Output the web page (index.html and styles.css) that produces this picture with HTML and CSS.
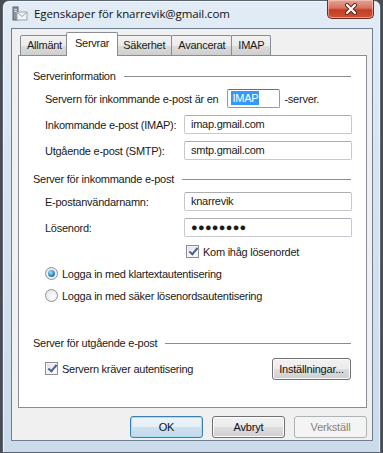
FILE: index.html
```html
<!DOCTYPE html>
<html lang="sv">
<head>
  <meta charset="UTF-8">
  <title>Egenskaper för knarrevik@gmail.com</title>
  <link rel="stylesheet" href="styles.css">
</head>
<body>
  <div class="window">
    <div class="titlebar">
      <svg class="app-icon" width="16" height="16" viewBox="0 0 16 16">
        <rect x="1" y="1" width="5" height="13" fill="#8a949c" stroke="#5d656b" stroke-width="1"/>
        <rect x="2" y="3" width="3" height="1" fill="#d4dadf"/>
        <rect x="2" y="5" width="3" height="1" fill="#d4dadf"/>
        <rect x="5" y="6" width="10" height="8" fill="#f4f4f4" stroke="#9aa3aa" stroke-width="1"/>
        <path d="M5.5 6.5 L10 10.5 L14.5 6.5" fill="none" stroke="#9aa3aa" stroke-width="1"/>
      </svg>
      <span class="title">Egenskaper för knarrevik@gmail.com</span>
      <div class="close">
        <svg width="14" height="12" viewBox="0 0 14 12">
          <path d="M3 2 L11 10 M11 2 L3 10" stroke="#5a2220" stroke-width="4" stroke-linecap="round"/>
          <path d="M3 2 L11 10 M11 2 L3 10" stroke="#ffffff" stroke-width="2.2" stroke-linecap="round"/>
        </svg>
      </div>
    </div>

    <div class="client">
      <div class="tabs">
        <div class="tab">Allmänt</div>
        <div class="tab active">Servrar</div>
        <div class="tab">Säkerhet</div>
        <div class="tab">Avancerat</div>
        <div class="tab">IMAP</div>
      </div>

      <div class="panel">
        <div class="group-head first">
          <span>Serverinformation</span>
          <div class="rule"></div>
        </div>
        <div class="row">
          <span>Servern för inkommande e-post är en</span>
          <div class="field small focused"><span class="selected">IMAP</span></div>
          <span>-server.</span>
        </div>
        <div class="row">
          <span class="label">Inkommande e-post (IMAP):</span>
          <div class="field">imap.gmail.com</div>
        </div>
        <div class="row">
          <span class="label">Utgående e-post (SMTP):</span>
          <div class="field">smtp.gmail.com</div>
        </div>

        <div class="group-head second">
          <span>Server för inkommande e-post</span>
          <div class="rule"></div>
        </div>
        <div class="row">
          <span class="label">E-postanvändarnamn:</span>
          <div class="field">knarrevik</div>
        </div>
        <div class="row">
          <span class="label">Lösenord:</span>
          <div class="field password">●●●●●●●●</div>
        </div>
        <div class="check-row remember">
          <span class="checkbox checked"></span>
          <span>Kom ihåg lösenordet</span>
        </div>
        <div class="check-row radio-one">
          <span class="radio on"></span>
          <span>Logga in med klartextautentisering</span>
        </div>
        <div class="check-row radio-two">
          <span class="radio"></span>
          <span>Logga in med säker lösenordsautentisering</span>
        </div>

        <div class="group-head third">
          <span>Server för utgående e-post</span>
          <div class="rule"></div>
        </div>
        <div class="row outgoing">
          <span class="checkbox checked"></span>
          <span>Servern kräver autentisering</span>
          <button class="btn settings">Inställningar...</button>
        </div>
      </div>

      <div class="buttons">
        <button class="btn default">OK</button>
        <button class="btn">Avbryt</button>
        <button class="btn" disabled>Verkställ</button>
      </div>
    </div>
  </div>
</body>
</html>
```

FILE: styles.css
```css
* {
  box-sizing: border-box;
  margin: 0;
  padding: 0;
}

body {
  background: #4b4d52;
  font-family: "Liberation Sans", Arial, sans-serif;
  font-size: 11px;
  letter-spacing: -0.25px;
  color: #1a1a1a;
  width: 383px;
  height: 453px;
  overflow: hidden;
}

.window {
  margin-left: 2px;
  width: 379px;
  height: 453px;
  border: 1px solid #5a6470;
  border-radius: 7px 7px 0 0;
  background: linear-gradient(180deg, #e2ecf6 0%, #d6e3f0 40%, #cbdbeb 100%);
  position: relative;
  box-shadow: inset 1px 1px 0 rgba(255, 255, 255, 0.7), inset -1px 0 0 rgba(255, 255, 255, 0.6);
}

.titlebar {
  height: 27px;
  display: flex;
  align-items: center;
  padding-left: 9px;
  padding-bottom: 3px;
  gap: 6px;
}

.app-icon {
  margin-top: 2px;
}

.title {
  font-family: "Open Sans", "Liberation Sans", sans-serif;
  font-size: 11.5px;
  letter-spacing: -0.1px;
  color: #111;
}

.close {
  position: absolute;
  top: -1px;
  right: 6px;
  width: 47px;
  height: 19px;
  border: 1px solid #6b2a24;
  border-top: none;
  border-radius: 0 0 5px 5px;
  background: linear-gradient(180deg, #e4a594 0%, #d6735f 45%, #c23c24 55%, #cc5538 100%);
  box-shadow: inset 0 0 0 1px rgba(255, 210, 200, 0.55);
  display: flex;
  align-items: center;
  justify-content: center;
}

.client {
  margin: 0 7px 0 8px;
  height: 413px;
  background: #f0f0f0;
  border: 1px solid #6f7f90;
  padding: 3px 5px 0 6px;
}

.tabs {
  display: flex;
  align-items: flex-end;
  height: 23px;
  padding-left: 2px;
  position: relative;
  z-index: 1;
}

.tab {
  height: 20px;
  padding: 0 6px;
  line-height: 19px;
  border: 1px solid #898c95;
  border-bottom: none;
  margin-right: -1px;
  border-radius: 2px 2px 0 0;
  background: linear-gradient(180deg, #f2f2f2 0%, #ebebeb 50%, #dddddd 51%, #cfcfcf 100%);
}

.tab.active {
  height: 24px;
  margin: 0 -2px 0 -2px;
  padding: 0 8px;
  line-height: 20px;
  background: #fff;
  position: relative;
  z-index: 2;
  top: 1px;
}

.panel {
  height: 353px;
  background: #fff;
  border: 1px solid #898c95;
  padding: 0 14px 0 14px;
}

.group-head {
  display: flex;
  align-items: center;
  height: 16px;
  gap: 8px;
}

.group-head .rule {
  flex: 1;
  height: 1px;
  background: #8c8c8c;
  margin-right: 1px;
}

.group-head.first {
  margin-top: 12px;
}

.group-head.second {
  margin-top: 11px;
}

.group-head.third {
  margin-top: 33px;
}

.row {
  display: flex;
  align-items: center;
  height: 19px;
  margin-top: 7px;
  padding-left: 12px;
}

.group-head + .row {
  margin-top: 5px;
}

.row .label {
  width: 139px;
}

.field {
  flex: 1;
  height: 19px;
  border: 1px solid #c4c9cf;
  border-top-color: #abadb3;
  border-radius: 2px;
  padding: 0 6px;
  line-height: 17px;
  background: #fff;
}

.field.small {
  flex: none;
  width: 53px;
  margin: 0 4px 0 9px;
  padding: 0 3px;
}

.field.focused {
  border-color: #6aa5da;
  border-top-color: #3d7bad;
}

.selected {
  background: #3399ff;
  color: #fff;
  display: inline-block;
  line-height: 14px;
  padding: 0 1px;
}

.field.password {
  font-size: 11px;
  letter-spacing: 0.3px;
}

.check-row {
  display: flex;
  align-items: center;
  gap: 4px;
  height: 13px;
}

.remember {
  margin-top: 8px;
  padding-left: 153px;
}

.radio-one {
  margin-top: 9px;
  padding-left: 12px;
}

.radio-two {
  margin-top: 9px;
  padding-left: 12px;
}

.checkbox {
  width: 13px;
  height: 13px;
  border: 1px solid #8e8f8f;
  background: linear-gradient(135deg, #dedede 0%, #f6f6f6 60%, #fff 100%);
  box-shadow: inset 0 0 0 1px #f4f4f4;
  position: relative;
  flex: none;
}

.checkbox.checked::after {
  content: "";
  position: absolute;
  left: 4px;
  top: 0px;
  width: 3px;
  height: 7px;
  border: solid #4a5f97;
  border-width: 0 2px 2px 0;
  transform: rotate(40deg);
}

.radio {
  width: 13px;
  height: 13px;
  border-radius: 50%;
  border: 1px solid #8e8f8f;
  background: radial-gradient(circle at 60% 60%, #fdfdfd 0%, #e2e2e2 100%);
  position: relative;
  flex: none;
}

.radio.on::after {
  content: "";
  position: absolute;
  left: 2px;
  top: 2px;
  width: 7px;
  height: 7px;
  border-radius: 50%;
  background: radial-gradient(circle at 40% 35%, #a9e3fb 0%, #2a8ac9 55%, #16558a 100%);
}

.row.outgoing {
  height: 21px;
  margin-top: 7px;
  gap: 4px;
}

.btn {
  font-family: "Liberation Sans", Arial, sans-serif;
  font-size: 11px;
  letter-spacing: -0.2px;
  color: #111;
  height: 22px;
  border: 1px solid #707070;
  border-radius: 3px;
  background: linear-gradient(180deg, #f2f2f2 0%, #ebebeb 50%, #dddddd 51%, #cfcfcf 100%);
  box-shadow: inset 0 0 0 1px #fcfcfc;
}

.btn.settings {
  margin-left: auto;
  width: 79px;
  margin-right: 1px;
}

.buttons {
  display: flex;
  justify-content: flex-end;
  gap: 9px;
  margin-top: 8px;
}

.buttons .btn {
  width: 73px;
}

.btn.default {
  border-color: #3c7fb1;
  box-shadow: inset 0 0 0 1px #a8dcf7;
  background: linear-gradient(180deg, #eef5fa 0%, #e3eef7 50%, #cfe1ef 51%, #c4d9ea 100%);
}

.btn:disabled {
  border-color: #adb2b5;
  background: #f4f4f4;
  color: #838383;
  box-shadow: none;
}
```
